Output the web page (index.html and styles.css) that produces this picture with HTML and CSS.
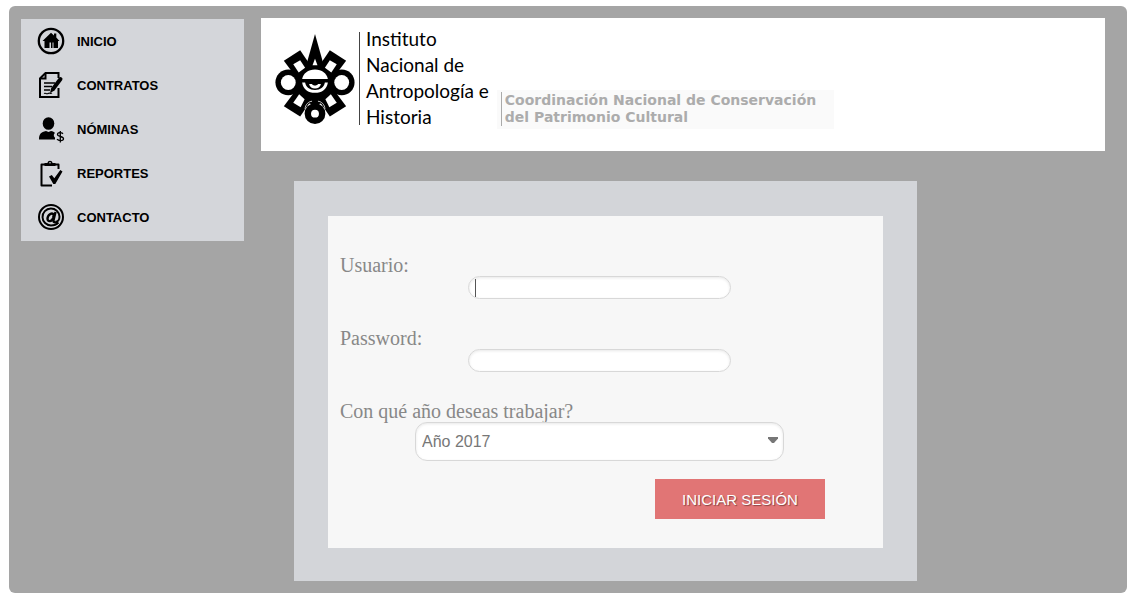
FILE: index.html
```html
<!DOCTYPE html>
<html lang="es">
<head>
<meta charset="utf-8">
<meta name="viewport" content="width=device-width, initial-scale=1">
<title>Coordinación Nacional de Conservación del Patrimonio Cultural</title>
<link rel="stylesheet" href="styles.css">
</head>
<body>
<div class="shell">
  <nav class="menu">
    <a class="menu-link" href="#">
      <svg class="menu-icon" viewBox="0 0 28 28" aria-hidden="true"><circle cx="14" cy="14" r="12.200" fill="none" stroke="#000" stroke-width="2.300"/><path d="M5.500 14 14 5.800l3 2.600V6.500h2.300v4L22.500 14H21v7h-4.500v-5.500h-1V21H14v-5.500h-1.500V21H7.500v-7z"/></svg>
      <span>INICIO</span>
    </a>
    <a class="menu-link" href="#">
      <svg class="menu-icon" viewBox="0 0 28 28" fill="none" stroke="#000" aria-hidden="true"><path d="M21.500 7V2H8.500L3 7.500V26h18.500v-9" stroke-width="2"/><path d="M8.500 2.500V7.500H3.500" stroke-width="2"/><path d="M7 12h11M7 15.500h8M7 19h6" stroke-width="1.300"/><path d="M7 22.500c2-1 2 1 4 0s2 .5 4-.5" stroke-width="1.200"/><path d="M23.500 8 16 18" stroke-width="4" stroke-linecap="round"/><path d="m14 17.500-1 4.500 4.500-2.500z" fill="#000" stroke="none"/></svg>
      <span>CONTRATOS</span>
    </a>
    <a class="menu-link" href="#">
      <svg class="menu-icon" viewBox="0 0 28 28" aria-hidden="true"><ellipse cx="11.500" cy="8.500" rx="5.800" ry="6.300"/><path d="M2 24.500c0-5.500 2-7.500 7-8.500l2.500 1 2.500-1c2 .3 3 1 4 2-2 1.500-1 4 0 4.500v2z"/><path d="M26 18.800c-1.500-1.600-5.500-1.600-5.500.7 0 2.500 6 1.500 6 4.200 0 2.500-5 2.300-6.500.5M23.300 16v11.500" fill="none" stroke="#000" stroke-width="1.300"/></svg>
      <span>NÓMINAS</span>
    </a>
    <a class="menu-link" href="#">
      <svg class="menu-icon" viewBox="0 0 28 28" aria-hidden="true"><path d="M15 26.500H4.500V5.500H21.500V10" fill="none" stroke="#000" stroke-width="2" stroke-linejoin="round"/><path d="M7.500 7V4h3c.3-3 4.700-3 5 0h3v3z"/><circle cx="13" cy="3.700" r=".8" fill="#d4d6da"/><path d="m12 17.500 2.800-1.600 2.500 3.300 6-8.200 2.200 1.500-7.200 12.500h-2z"/></svg>
      <span>REPORTES</span>
    </a>
    <a class="menu-link" href="#">
      <svg class="menu-icon" viewBox="0 0 28 28" fill="none" aria-hidden="true"><circle cx="14" cy="14" r="12" stroke="#000" stroke-width="2"/><path d="M22.500 20.500c-2 2-5 3.200-8.500 3.200A9.700 9.700 0 1 1 23.700 14" stroke="#e5e6e9" stroke-width="1"/><path d="M21.500 19.500c-2 2-4.500 3-7.500 3A8.500 8.500 0 1 1 22.500 13.500c0 3-1.700 5.300-4 5.300" stroke="#000" stroke-width="2"/><path d="M16.800 11.500c-1.800-2.500-6.300.2-6.300 4.300 0 3.500 4.300 3 5.700-1z" stroke="#000" stroke-width="2.400"/><path d="m18.500 9-2 8.200c-.4 2 .8 2.500 2.300 1.500" stroke="#000" stroke-width="2.400"/></svg>
      <span>CONTACTO</span>
    </a>
  </nav>

  <main class="content">
    <header class="banner">
      <div class="emblem-box">
        <svg class="emblem" viewBox="0 0 80 92" role="img" aria-label="Emblema INAH">
          <path d="M40 0 49 32H31z"/>
          <path d="M8.500 27 25 16.500 41 40 25 49z"/>
          <path d="M71.500 27 55 16.500 39 40 55 49z"/>
          <path d="M8.500 73 25 83.500 41 60 25 51z"/>
          <path d="M71.500 73 55 83.500 39 60 55 51z"/>
          <circle cx="13" cy="49" r="13"/>
          <circle cx="67" cy="49" r="13"/>
          <circle cx="40" cy="50" r="21"/>
          <circle cx="40" cy="80.500" r="10.500"/>
          <path d="M30 76c0-5 4-8 7-8M50 76c0-5-4-8-7-8" fill="none" stroke="#fff" stroke-width=".8"/>
          <path d="M40 25 42.500 31.500h-5z" fill="#fff"/>
          <path d="M18 30.500 25 26.500 30 34 23.500 39z" fill="#fff"/>
          <path d="M62 30.500 55 26.500 50 34 56.500 39z" fill="#fff"/>
          <path d="M18 69.500 24 61 29.500 66 25.500 74z" fill="#fff"/>
          <path d="M62 69.500 56 61 50.500 66 54.500 74z" fill="#fff"/>
          <circle cx="13" cy="49" r="7.500" fill="#fff"/>
          <circle cx="67" cy="49" r="7.500" fill="#fff"/>
          <circle cx="40" cy="80.500" r="4" fill="#fff"/>
          <path d="M27 45.500c1-5.500 6-9.500 13-9.500s12 4 13 9.500z" fill="#fff"/>
          <path d="M27 49c1 7 6 10.500 13 10.500S52 56 53 49l-3 0c-1 5-4.500 7.500-10 7.500S31 54 30 49z" fill="#fff"/>
          <path d="M34 50.500h3c.5 2 5.500 2 6 0h3c-.7 3.200-3 4.500-6 4.500s-5.300-1.300-6-4.500z" fill="#fff"/>
        </svg>
      </div>
      <p class="institute">Instituto<br>Nacional de<br>Antropología e<br>Historia</p>
      <div class="office"><p class="office-name">Coordinación Nacional de Conservación<br>del Patrimonio Cultural</p></div>
    </header>

    <section class="card">
      <form class="login">
        <label class="label" for="usuario">Usuario:</label>
        <div class="field"><input class="input" id="usuario" type="text"><span class="caret"></span></div>
        <label class="label" for="password">Password:</label>
        <div class="field"><input class="input" id="password" type="password"></div>
        <label class="label" for="anio">Con qué año deseas trabajar?</label>
        <div class="select-field">
          <select class="select" id="anio"><option>Año 2017</option></select>
          <svg class="arrow" viewBox="0 0 10 6" aria-hidden="true"><path d="M0 0h10v1.500L6 6H4L0 1.500z" fill="#777"/></svg>
        </div>
        <button class="submit" type="button">INICIAR SESIÓN</button>
      </form>
    </section>
  </main>
</div>
</body>
</html>
```
FILE: styles.css
```css
* { box-sizing: border-box; }

body {
  margin: 0;
  padding: 6px 9px 15px;
  background: #fff;
  font-family: "Liberation Sans", Arial, sans-serif;
}

p { margin: 0; }

.shell {
  display: grid;
  grid-template-columns: 223px 1fr;
  gap: 17px;
  align-items: start;
  padding: 12px 22px 12px 12px;
  border-radius: 6px;
  background: #a5a5a5;
}

.menu {
  display: flex;
  flex-direction: column;
  margin-top: 1px;
  padding-bottom: 2px;
  background: #d4d6da;
}

.menu-link {
  display: flex;
  align-items: center;
  gap: 12px;
  height: 44px;
  padding-left: 16px;
  color: #000;
  font-size: 13px;
  font-weight: bold;
  text-decoration: none;
}

.menu-icon { width: 28px; height: 28px; }

.banner {
  display: flex;
  align-items: flex-start;
  padding: 8px 14px 21px;
  background: #fff;
}

.emblem-box {
  display: flex;
  margin-top: 6px;
  padding: 2px 4px 0 0;
  border-right: 1px solid #444;
}

.emblem {
  width: 80px;
  height: 91px;
}

.institute {
  margin-left: 6px;
  color: #000;
  font-family: Lato, sans-serif;
  font-size: 19px;
  line-height: 26px;
}

.office {
  margin: 64px 0 0 8px;
  padding: 2px 18px 3px 4px;
  background: #fafafa;
}

.office-name {
  padding-left: 3px;
  border-left: 1px solid #aaa;
  color: #acacac;
  font-family: "DejaVu Sans", sans-serif;
  font-size: 14px;
  font-weight: bold;
  line-height: 17px;
  white-space: nowrap;
}

.card {
  max-width: 623px;
  margin: 30px 0 0 33px;
  padding: 35px 34px 33px;
  background: #d3d5d9;
}

.login {
  display: flex;
  flex-direction: column;
  padding: 38px 24px 29px 12px;
  background: #f7f7f7;
}

.label {
  color: #888;
  font-family: "Liberation Serif", serif;
  font-size: 20px;
  line-height: 22px;
}

.field {
  position: relative;
  align-self: center;
  display: flex;
  width: 263px;
  margin-bottom: 28px;
}

.input {
  width: 100%;
  height: 23px;
  padding: 0 8px;
  border: 1px solid #d8d8d8;
  border-radius: 12px;
  background: #fff;
  box-shadow: inset 0 1px 3px #e8e8e8;
  font-size: 15px;
  outline: none;
}

.caret {
  position: absolute;
  top: 3px;
  left: 7px;
  width: 1px;
  height: 18px;
  background: #555;
}

.select-field {
  position: relative;
  align-self: center;
  display: flex;
  width: 369px;
}

.select {
  appearance: none;
  width: 100%;
  height: 39px;
  padding: 0 6px;
  border: 1px solid #d8d8d8;
  border-radius: 12px;
  background: #fff;
  box-shadow: inset 0 1px 3px #e8e8e8;
  color: #777;
  font-family: inherit;
  font-size: 16px;
}

.arrow {
  position: absolute;
  top: 15px;
  right: 6px;
  width: 10px;
  height: 6px;
  pointer-events: none;
}

.submit {
  align-self: flex-end;
  width: 170px;
  height: 40px;
  margin: 18px 34px 0 0;
  border: 0;
  background: #e17575;
  color: #fff;
  font-family: inherit;
  font-size: 15px;
  text-shadow: 1px 1px 1px #884444;
}
```
